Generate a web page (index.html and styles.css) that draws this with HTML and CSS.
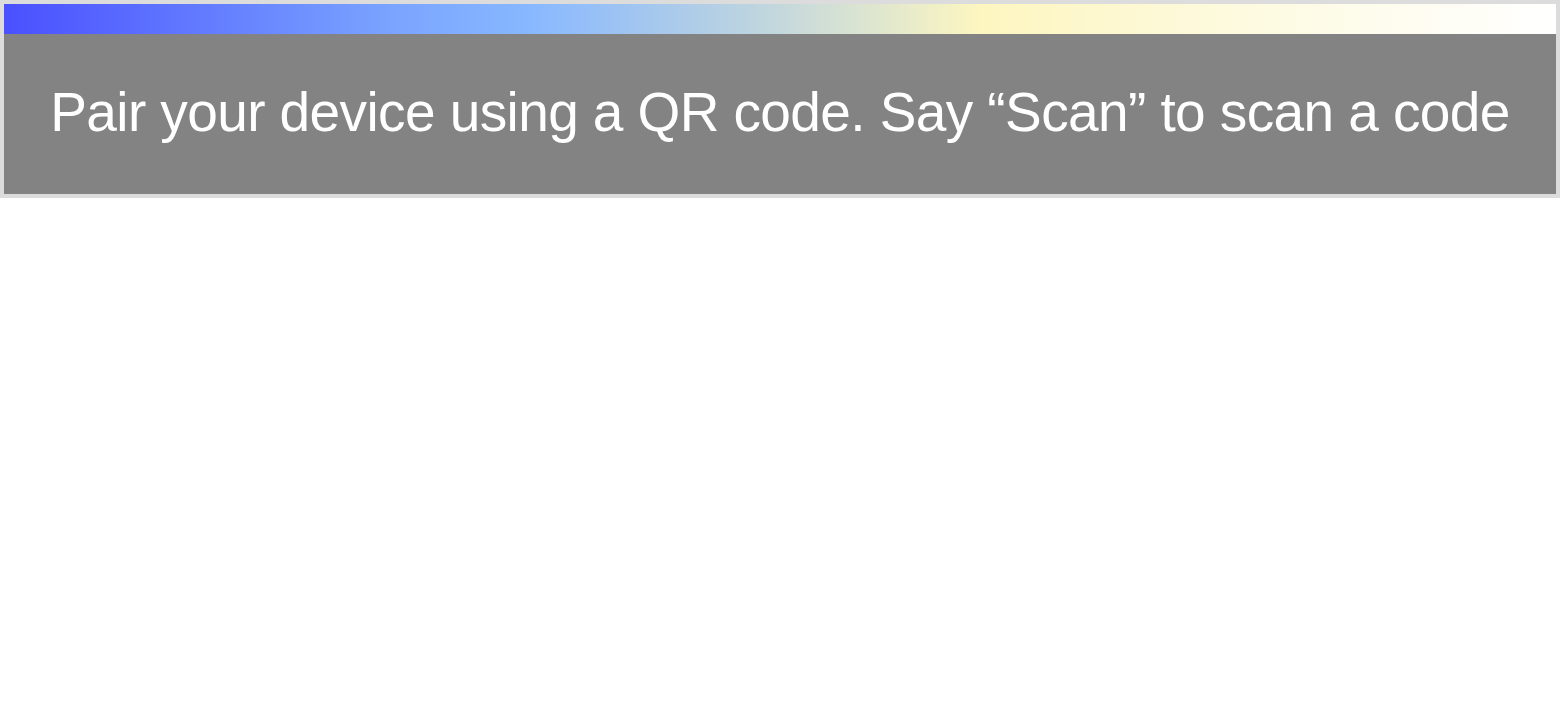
FILE: index.html
```html
<!DOCTYPE html>
<html>
<head>
<meta charset="utf-8">
<link rel="stylesheet" href="styles.css">
</head>
<body>
<div class="frame">
  <div class="bar"></div>
  <div class="panel">
    <p class="message">Pair your device using a QR code. Say “Scan” to scan a code</p>
  </div>
</div>
</body>
</html>
```
FILE: styles.css
```css
html, body {
  margin: 0;
  padding: 0;
  background: #ffffff;
}
.frame {
  width: 1552px;
  border: 4px solid #dcdcdc;
  display: flex;
  flex-direction: column;
}
.bar {
  height: 30px;
  background: linear-gradient(to right, #4a50ff 0%, #7aa4ff 25%, #88b8ff 34%, #c4d8dc 50%, #fdf6c0 63%, #fdfae0 80%, #ffffff 100%);
}
.panel {
  height: 160px;
  box-sizing: border-box;
  padding-bottom: 4px;
  background: #838383;
  display: flex;
  align-items: center;
  justify-content: center;
}
.message {
  margin: 0;
  color: #ffffff;
  font-family: "Liberation Sans", Arial, sans-serif;
  font-size: 55px;
  letter-spacing: -0.6px;
  white-space: nowrap;
}
```
